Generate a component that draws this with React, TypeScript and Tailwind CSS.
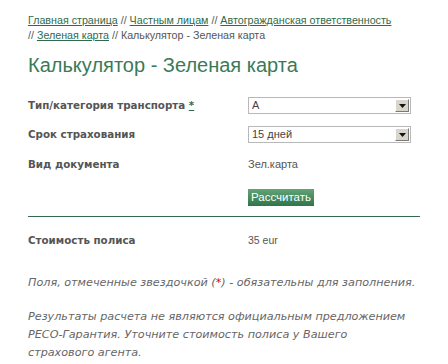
import { useState } from 'react'

const LINK = 'text-[#2f6b4a] underline'
const LABEL = "font-['DejaVu_Sans',sans-serif] font-bold text-[10.3px] text-[#555]"

function SelectBox({ value, options }: { value: string; options: string[] }) {
  const [v, setV] = useState(value)
  return (
    <div className="relative w-[163px] h-[17px] border border-[#b8b8b8] bg-white">
      <select
        value={v}
        onChange={(e) => setV(e.target.value)}
        className="absolute inset-0 w-full h-full opacity-0"
      >
        {options.map((o) => (
          <option key={o}>{o}</option>
        ))}
      </select>
      <div className="flex h-full items-center justify-between pl-[3px] pr-[1px] pointer-events-none">
        <span className="text-[11px] leading-none text-[#444]">{v}</span>
        <span className="flex h-[13px] w-[14px] items-center justify-center border border-t-white border-l-white border-r-[#7a7a7a] border-b-[#7a7a7a] bg-[#d8d5cc]">
          <svg width="7" height="4" viewBox="0 0 7 4">
            <path d="M0 0h7L3.5 4z" fill="#111" />
          </svg>
        </span>
      </div>
    </div>
  )
}

export default function App() {
  return (
    <div className="w-[448px] h-[364px] bg-white overflow-hidden px-[28px] pt-[13px] font-['Liberation_Sans',sans-serif] text-[#555]">
      <p className="text-[10.7px] leading-[15px] text-[#555]">
        <a className={LINK}>Главная страница</a> // <a className={LINK}>Частным лицам</a> //{' '}
        <a className={LINK}>Автогражданская ответственность</a>
        <br />
        // <a className={LINK}>Зеленая карта</a> // Калькулятор - Зеленая карта
      </p>

      <h1 className="mt-[10px] text-[20px] leading-[24px] text-[#3b7a57]">Калькулятор - Зеленая карта</h1>

      <div className="mt-[20px] grid grid-cols-[220px_1fr] items-center gap-y-[12px] text-[11px]">
        <span className={LABEL}>
          Тип/категория транспорта <a className={LINK}>*</a>
        </span>
        <SelectBox value="A" options={['A', 'B', 'C', 'D', 'E']} />

        <span className={LABEL}>Срок страхования</span>
        <SelectBox value="15 дней" options={['15 дней', '1 месяц', '3 месяца', '6 месяцев', '1 год']} />

        <span className={`${LABEL} leading-[17px] mt-[1px]`}>Вид документа</span>
        <span className="text-[#555] leading-[17px] mt-[1px]">Зел.карта</span>

        <span />
        <button className="mt-[4px] w-[66px] h-[17px] bg-gradient-to-b from-[#62a378] to-[#2f7648] text-white text-[11.5px] leading-none">
          Рассчитать
        </button>
      </div>

      <div className="mt-[10px] h-px bg-[#2f6b4a]" />

      <div className="mt-[15px] grid grid-cols-[220px_1fr] items-center leading-[17px]">
        <span className={LABEL}>Стоимость полиса</span>
        <span className="text-[10.5px] text-[#555]">35 eur</span>
      </div>

      <div className="font-['DejaVu_Sans',sans-serif] italic text-[11.2px] leading-[18px] text-[#666]">
        <p className="mt-[25px]">
          Поля, отмеченные звездочкой (<span className="text-[#c00]">*</span>) - обязательны для заполнения.
        </p>
        <p className="mt-[16px] w-[384px]">
          Результаты расчета не являются официальным предложением РЕСО-Гарантия. Уточните стоимость полиса у Вашего
          страхового агента.
        </p>
      </div>
    </div>
  )
}
